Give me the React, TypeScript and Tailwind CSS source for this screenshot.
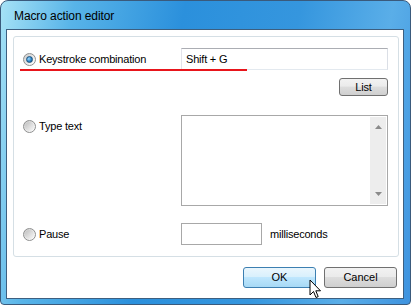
const font = { fontFamily: "'Liberation Sans', Tahoma, sans-serif" };

function Radio({ checked }: { checked?: boolean }) {
  return (
    <span className="flex h-[13px] w-[13px] shrink-0 items-center justify-center rounded-full border border-[#8e8f8f] bg-[linear-gradient(135deg,#c9c9c9_0%,#eeeeee_60%,#ffffff_100%)]">
      {checked ? (
        <span className="h-[7px] w-[7px] rounded-full border border-[#1b4f7a] bg-[radial-gradient(circle_at_35%_35%,#9fd8ff_0%,#2a86c8_55%,#0f4d86_100%)]" />
      ) : (
        <span className="h-[9px] w-[9px] rounded-full bg-[linear-gradient(135deg,#bfbfbf_0%,#e8e8e8_70%,#f6f6f6_100%)]" />
      )}
    </span>
  );
}

function Button({ label, hover }: { label: string; hover?: boolean }) {
  return (
    <div
      className={`flex h-[21px] w-[73px] items-center justify-center rounded-[3px] border text-[11px] text-black ${
        hover
          ? "border-[#3c7fb1] bg-[linear-gradient(180deg,#eaf6fd_0%,#d9f0fc_45%,#bee6fd_50%,#a7d9f5_100%)]"
          : "border-[#707070] bg-[linear-gradient(180deg,#f2f2f2_0%,#ebebeb_45%,#dddddd_50%,#cfcfcf_100%)]"
      }`}
    >
      {label}
    </div>
  );
}

export default function App() {
  return (
    <div className="relative h-[305px] w-[411px] overflow-hidden bg-white" style={font}>
      <div className="flex h-full w-full flex-col rounded-t-[8px] rounded-b-[4px] border border-[#3a5a7c] bg-[linear-gradient(100deg,#a6e2f6_0%,#58b4e8_16%,#2b90dc_40%,#3596de_65%,#5aaee8_85%,#3e93df_100%)] pb-[5px] pl-[5px] pr-[6px]">
        <div className="flex h-[28px] shrink-0 items-center pl-[8px] pt-[1px] text-[12px] tracking-[-0.1px] text-black">
          Macro action editor
        </div>
        <div className="flex flex-1 flex-col border border-[#3d5f80] bg-white">
          <div className="relative ml-[6px] mr-[4px] mt-[6px] rounded-[3px] border border-[#d5dfe5] pb-[11px] pl-[9px] pt-[11px] text-[11px] tracking-[-0.2px] text-black">
            <div className="grid grid-cols-[158px_207px]">
              <div className="flex h-[22px] items-center gap-[3px]">
                <Radio checked />
                <span>Keystroke combination</span>
              </div>
              <div className="flex h-[22px] items-center border border-[#abadb3] border-l-[#e2e3ea] border-r-[#dbdfe6] border-b-[#e3e9ef] pl-[4px]">
                Shift + G
              </div>

              <div />
              <div className="mt-[8px] flex justify-end">
                <div className="flex h-[18px] w-[49px] items-center justify-center rounded-[3px] border border-[#707070] bg-[linear-gradient(180deg,#f2f2f2_0%,#ebebeb_45%,#dddddd_50%,#cfcfcf_100%)]">
                  List
                </div>
              </div>

              <div className="mt-[24px] flex h-[13px] items-center gap-[3px]">
                <Radio />
                <span>Type text</span>
              </div>
              <div className="mt-[19px] flex h-[91px] border border-[#a8a8a8] bg-white">
                <div className="flex-1" />
                <div className="my-[1px] mr-[1px] flex w-[16px] flex-col items-center justify-between bg-[#ededed] py-[8px]">
                  <svg width="7" height="4" viewBox="0 0 7 4"><path d="M0 4 L3.5 0 L7 4 Z" fill="#8a8a8a" /></svg>
                  <svg width="7" height="4" viewBox="0 0 7 4"><path d="M0 0 L3.5 4 L7 0 Z" fill="#8a8a8a" /></svg>
                </div>
              </div>

              <div className="mt-[17px] flex h-[22px] items-center gap-[3px]">
                <Radio />
                <span>Pause</span>
              </div>
              <div className="mt-[17px] flex h-[22px] items-center gap-[8px]">
                <div className="h-[22px] w-[81px] border border-[#a8a8a8] bg-white" />
                <span>milliseconds</span>
              </div>
            </div>
            <div className="absolute left-[6px] top-[32px] h-[2px] w-[227px] bg-[#e8151b]" />
          </div>
          <div className="mr-[6px] mt-[10px] flex justify-end gap-[8px]">
            <Button label="OK" hover />
            <Button label="Cancel" />
          </div>
        </div>
      </div>
      <svg className="absolute left-[309px] top-[279px]" width="13" height="21" viewBox="0 0 13 21">
        <path d="M1 1 L1 16 L4.5 12.5 L7 18.5 L9.2 17.6 L6.8 11.8 L11.5 11.8 Z" fill="#ffffff" stroke="#000000" strokeWidth="1" strokeLinejoin="miter" />
      </svg>
    </div>
  );
}
